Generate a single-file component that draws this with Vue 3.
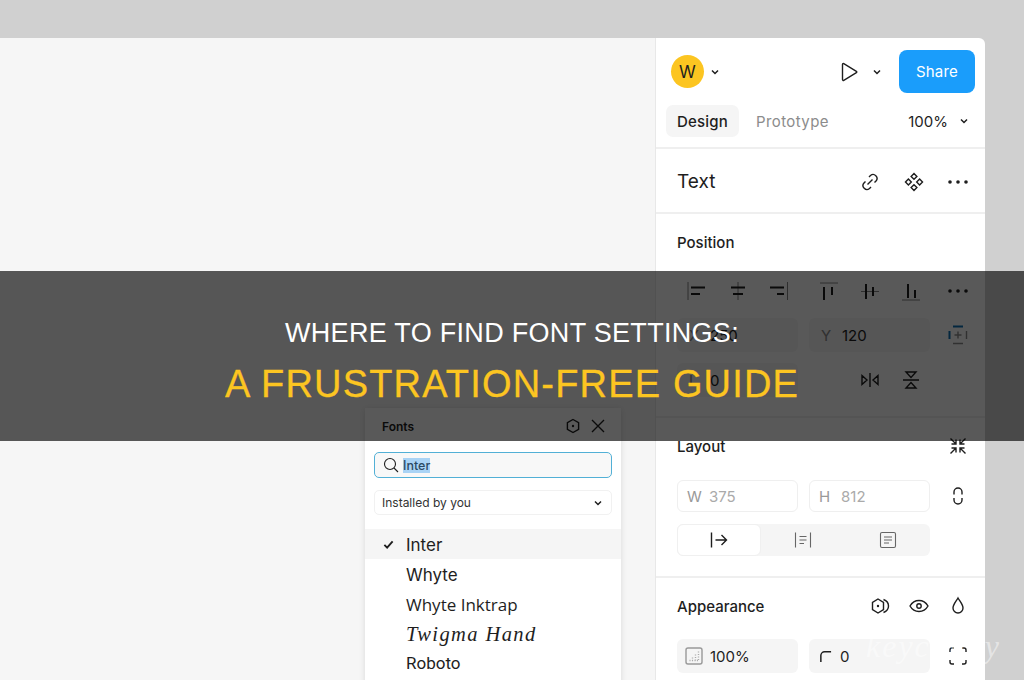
<template>
  <div class="page">
    <div class="window">
      <div class="canvas">
        <div class="fonts-pop">
          <div class="pop-head">
            <b>Fonts</b>
            <svg class="ic16 pop-hex" viewBox="0 0 16 16"><path d="M8 1.500l5.600 3.200v6.600L8 14.500l-5.600-3.200V4.700z" /><circle class="dot" cx="8" cy="8" r="1.200" /></svg>
            <svg class="ic16" viewBox="0 0 16 16"><path d="M2 2l12 12M14 2L2 14" /></svg>
          </div>
          <div class="pop-search">
            <svg class="ic16" viewBox="0 0 16 16"><circle cx="7" cy="7" r="5.500" /><path d="M11 11l4 4" /></svg>
            <span class="sel">Inter</span>
          </div>
          <div class="pop-select">
            <span>Installed by you</span>
            <svg class="chev" viewBox="0 0 8 8"><path d="M1 2.500l3 3 3-3" /></svg>
          </div>
          <ul class="font-list">
            <li class="on">
              <svg class="check" viewBox="0 0 12 12"><path d="M1.500 6.500l3 3 6-7" /></svg>
              Inter
            </li>
            <li>Whyte</li>
            <li class="inktrap">Whyte Inktrap</li>
            <li class="hand">Twigma Hand</li>
            <li class="roboto">Roboto</li>
          </ul>
        </div>
      </div>

      <aside class="panel">
        <section class="top">
          <div class="bar">
            <span class="avatar">W</span>
            <svg class="chev" viewBox="0 0 8 8"><path d="M1 2.500l3 3 3-3" /></svg>
            <svg class="play" viewBox="0 0 20 20"><path d="M3.500 2.400v15.200c0 .7.7 1 1.300.7l12.600-7.600c.5-.3.5-1.100 0-1.400L4.800 1.700c-.6-.3-1.300 0-1.300.7z" /></svg>
            <svg class="chev" viewBox="0 0 8 8"><path d="M1 2.500l3 3 3-3" /></svg>
            <button class="share">Share</button>
          </div>
          <div class="tabs">
            <span class="tab active">Design</span>
            <span class="tab">Prototype</span>
            <span class="zoom">100%</span>
            <svg class="chev" viewBox="0 0 8 8"><path d="M1 2.500l3 3 3-3" /></svg>
          </div>
        </section>

        <section class="text-row">
          <h3>Text</h3>
          <div class="tools">
            <svg class="ic20" viewBox="0 0 20 20"><path d="M7.500 12.500l5-5M9 5l1.500-1.500a3.900 3.900 0 015.500 5.500L14.500 10.500M11 15l-1.500 1.500A3.900 3.900 0 014 11l1.500-1.500" /></svg>
            <svg class="ic20" viewBox="0 0 20 20"><path d="M10 1.500l2.900 2.900L10 7.300 7.100 4.400zM15.600 7.100L18.500 10l-2.900 2.900L12.700 10zM4.400 7.100L7.300 10l-2.900 2.900L1.500 10zM10 12.700l2.900 2.900-2.900 2.900-2.900-2.900z" /></svg>
            <svg class="ic20" viewBox="0 0 20 20"><circle class="dot" cx="2" cy="10" r="1.800" /><circle class="dot" cx="10" cy="10" r="1.800" /><circle class="dot" cx="18" cy="10" r="1.800" /></svg>
          </div>
        </section>

        <section class="position">
          <h4>Position</h4>
          <div class="align-row">
            <div class="aligns">
              <svg v-for="a in alignIcons" :key="a.thick" class="ic20" viewBox="0 0 20 20">
                <path class="thin" :d="a.thin" />
                <path class="thick" :d="a.thick" />
              </svg>
            </div>
            <svg class="ic20" viewBox="0 0 20 20"><circle class="dot" cx="2" cy="10" r="1.800" /><circle class="dot" cx="10" cy="10" r="1.800" /><circle class="dot" cx="18" cy="10" r="1.800" /></svg>
          </div>
          <div class="grid-row">
            <div class="field"><i>X</i>250</div>
            <div class="field"><i>Y</i>120</div>
            <svg class="ic20 constraint" viewBox="0 0 20 20">
              <path class="blue" d="M5 1.500h10M1.500 6v8" />
              <path d="M18.500 6v8M5 18.500h10M10 6.500v7M6.500 10h7" />
            </svg>
          </div>
          <div class="grid-row">
            <div class="field"><i>L</i>0</div>
            <div class="flips">
              <svg class="ic20" viewBox="0 0 20 20"><path d="M10 3v14M2 5.500L7 10l-5 4.500zM18 5.500L13 10l5 4.500z" /></svg>
              <svg class="ic20" viewBox="0 0 20 20"><path d="M2 10h16M5 2h10l-5 5.500zM5 18h10l-5-5.500z" /></svg>
            </div>
          </div>
        </section>

        <section class="layout">
          <div class="head-row">
            <h4>Layout</h4>
            <svg class="ic20" viewBox="0 0 20 20"><path d="M2.500 2.500L8 8M8 3.500V8H3.500M17.500 2.500L12 8M12 3.500V8h4.500M2.500 17.500L8 12M8 16.500V12H3.500M17.500 17.500L12 12M12 16.500V12h4.500" /></svg>
          </div>
          <div class="grid-row">
            <div class="field ghost"><i>W</i>375</div>
            <div class="field ghost"><i>H</i>812</div>
            <svg class="ic20" viewBox="0 0 20 20"><path d="M6 8.500V6a4 4 0 018 0v2.500M6 12v2a4 4 0 008 0v-2" /></svg>
          </div>
          <div class="segments">
            <span class="seg active">
              <svg class="ic20" viewBox="0 0 20 20"><path d="M2.500 2.500v15M6.500 10h11M12.500 5l5 5-5 5" /></svg>
            </span>
            <span class="seg">
              <svg class="ic20 soft" viewBox="0 0 20 20"><path d="M2.500 2.500v15M17.500 2.500v15M6.500 6.500h7M6.500 10h7M6.500 13.500h4.500" /></svg>
            </span>
            <span class="seg">
              <svg class="ic20 soft" viewBox="0 0 20 20"><rect x="2.500" y="2.500" width="15" height="15" rx="1.500" /><path d="M6 7h8M6 10h8M6 13h5" /></svg>
            </span>
          </div>
        </section>

        <section class="appearance">
          <div class="head-row">
            <h4>Appearance</h4>
            <div class="tools small">
              <svg class="ic20" viewBox="0 0 20 20"><path d="M8 3l5.500 3.500v7L8 17l-5.500-3.500v-7z" /><circle class="dot" cx="8" cy="10" r="1.200" /><path d="M13.500 3.500c4 1.500 5 3.500 5 6.500s-1 5-5 6.500" /></svg>
              <svg class="ic20" viewBox="0 0 20 20"><path d="M1 10c2-3.500 5-5.500 9-5.500s7 2 9 5.500c-2 3.500-5 5.500-9 5.500S3 13.500 1 10z" /><circle cx="10" cy="10" r="2.200" /></svg>
              <svg class="ic20" viewBox="0 0 20 20"><path d="M10 2c-2 3.500-5 6.500-5 10a5 5 0 0010 0c0-3.500-3-6.500-5-10z" /></svg>
            </div>
          </div>
          <div class="grid-row">
            <div class="field tight">
              <svg class="ic20 opacity" viewBox="0 0 20 20"><rect x="2" y="2" width="16" height="16" rx="2" /><path class="dots" d="M14.500 5.500v9M11.500 8.500v6M8.500 11.500v3M5.500 14.500h9" /></svg>
              100%
            </div>
            <div class="field tight">
              <svg class="ic14 corner" viewBox="0 0 14 14"><path d="M2 13V6a4 4 0 014-4h7" /></svg>
              0
            </div>
            <svg class="ic20" viewBox="0 0 20 20"><path d="M2 6V4a2 2 0 012-2h2M14 2h2a2 2 0 012 2v2M18 14v2a2 2 0 01-2 2h-2M6 18H4a2 2 0 01-2-2v-2" /></svg>
          </div>
        </section>
      </aside>
    </div>

    <span class="mark">keycandy</span>

    <div class="band">
      <p class="line-one">WHERE TO FIND FONT SETTINGS:</p>
      <p class="line-two">A FRUSTRATION-FREE GUIDE</p>
    </div>
  </div>
</template>

<script setup>
const alignIcons = [
  { thin: 'M1 1v18', thick: 'M4 6.500h14M4 13h9' },
  { thin: 'M10 1v18', thick: 'M3 6.500h14M5 13h10' },
  { thin: 'M18.500 1v18', thick: 'M1 6.500h14M8 13h7' },
  { thin: 'M1 2h18', thick: 'M5 6v13M13 6v8' },
  { thin: 'M1 10.500h18', thick: 'M6 3v15M13 6v9' },
  { thin: 'M1 19h18', thick: 'M7 3v14M14 9v8' },
]
</script>

<style>
html, body { margin: 0; height: 100%; overflow: hidden; background: #d0d0d0; }
</style>

<style scoped>
.page { position: relative; width: 1024px; height: 680px; overflow: hidden; background: #d0d0d0; font-family: Inter, "Liberation Sans", sans-serif; color: #1e1e1e; }
.window { display: flex; width: 985px; height: 642px; margin-top: 38px; border-top-right-radius: 6px; overflow: hidden; }
.canvas { position: relative; flex: 1; background: #f6f6f6; }
.panel { width: 330px; flex: none; background: #fff; border-left: 1px solid #e8e8e8; box-sizing: border-box; }
section { box-sizing: border-box; border-bottom: 2px solid #efefef; }
h3, h4, p, ul { margin: 0; padding: 0; }
svg { fill: none; stroke: #1e1e1e; stroke-width: 1.4; flex: none; }
.dot { fill: #1e1e1e; stroke: none; }
.ic20 { width: 20px; height: 20px; }
.ic16 { width: 16px; height: 16px; }
.ic14 { width: 13px; height: 13px; }
.chev { width: 8px; height: 8px; stroke-width: 1.500; }

.top { height: 111px; padding: 12px 10px 0 10px; }
.bar { display: flex; align-items: center; height: 43px; padding-left: 5px; }
.avatar { width: 33px; height: 33px; border-radius: 50%; background: #fcc521; display: flex; align-items: center; justify-content: center; font-size: 17px; font-weight: 400; }
.bar .chev:nth-child(2) { margin-left: 7px; }
.play { width: 20px; height: 20px; margin-left: auto; }
.bar .chev:nth-child(4) { margin-left: 14px; }
.share { margin-left: 18px; width: 76px; height: 43px; border: 0; border-radius: 8px; background: #1a9dfb; color: #fff; font: 400 15px Inter, sans-serif; letter-spacing: .2px; }
.tabs { display: flex; align-items: center; margin-top: 12px; height: 32px; }
.tab { padding: 2px 11px 0; line-height: 30px; border-radius: 7px; font-size: 15px; color: #8c8c8c; letter-spacing: .4px; }
.tab.active { background: #f5f5f5; color: #1e1e1e; font-weight: 500; margin-right: 6px; letter-spacing: .2px; }
.zoom { margin-left: auto; font-size: 15px; padding-top: 1px; }
.tabs .chev { margin: 0 7px 0 12px; }

.text-row { height: 65px; display: flex; align-items: center; justify-content: space-between; padding: 2px 17px 0 21px; }
h3 { font-size: 19px; font-weight: 400; }
.tools { display: flex; gap: 24px; align-items: center; }
.tools.small { gap: 19px; }
h4 { font-size: 15px; font-weight: 500; }

.position { height: 204px; padding: 19px 17px 0 21px; }
.align-row { display: flex; justify-content: space-between; align-items: center; margin-top: 29px; }
.aligns { display: flex; gap: 21px; margin-left: 10px; }
.aligns svg:nth-child(4) { margin-left: 9px; }
.thin { stroke: #666; stroke-width: .8; }
.thick { stroke: #1e1e1e; stroke-width: 2; }
.grid-row { display: grid; grid-template-columns: 121px 121px 1fr; column-gap: 11px; align-items: center; margin-top: 11px; }
.align-row + .grid-row { margin-top: 17px; }
.grid-row > svg:last-child { justify-self: end; }
.field { display: flex; align-items: center; height: 34px; border-radius: 6px; background: #f5f5f5; font-size: 15px; padding-left: 12px; box-sizing: border-box; gap: 8px; }
.field i { font-style: normal; color: #8c8c8c; width: 13px; }
.field.ghost { background: #fff; border: 1.500px solid #efefef; color: #aaa; height: 32px; padding-left: 9px; gap: 9px; }
.field.ghost i { color: #999; }
.field.tight { padding-left: 7px; gap: 6px; }
.flips { display: flex; gap: 21px; padding-left: 51px; }
.constraint .blue { stroke: #0c70b4; stroke-width: 2; }
.constraint { stroke: #8c8c8c; }

.layout { height: 160px; padding: 19px 17px 0 21px; }
.head-row { display: flex; justify-content: space-between; align-items: center; height: 18px; }
.layout .grid-row { margin-top: 25px; }
.segments { display: grid; grid-template-columns: repeat(3, 1fr); width: 253px; height: 32px; margin-top: 12px; background: #f5f5f5; border-radius: 6px; }
.seg { display: flex; align-items: center; justify-content: center; }
.seg.active { background: #fff; border-radius: 6px; border: 1px solid #f0f0f0; }
.soft { stroke: #666; stroke-width: 1.100; }

.appearance { border-bottom: 0; padding: 19px 17px 0 21px; }
.appearance .grid-row { margin-top: 24px; }
.opacity { stroke: #999; }
.dots { stroke: #aaa; stroke-dasharray: 1 1.500; }
.corner { stroke-width: 1.600; margin-left: 3px; margin-right: 2px; }

.mark { position: absolute; left: 866px; top: 628px; font: italic 32px "Liberation Serif", serif; letter-spacing: 2px; color: rgba(255, 255, 255, .45); }

.fonts-pop { position: absolute; left: 365px; top: 370px; width: 256px; height: 300px; background: #fff; box-shadow: 0 1px 6px rgba(0, 0, 0, .12); }
.pop-head { display: flex; align-items: center; height: 36px; padding: 0 15px 0 17px; font-size: 12px; }
.pop-head b { font-weight: 600; margin-right: auto; }
.pop-hex { margin-right: 9px; }
.pop-search { display: flex; align-items: center; gap: 4px; height: 26px; margin: 8px 9px 0; padding-left: 8px; border: 1.500px solid #52b0d6; border-radius: 5px; background: #f8f8f8; font-size: 12.500px; box-sizing: border-box; }
.pop-search svg { stroke-width: 1.100; }
.sel { background: #a9d3f5; color: #2b4a63; font-weight: 500; }
.pop-select { display: flex; justify-content: space-between; align-items: center; height: 25px; margin: 12px 9px 0; padding: 0 9px 0 7px; border: 1.500px solid #f1f1f1; border-radius: 5px; font-size: 12px; box-sizing: border-box; color: #333; }
.font-list { list-style: none; margin-top: 14px; font-size: 17px; }
.font-list li { padding-left: 41px; height: 29.500px; line-height: 33px; position: relative; }
.font-list li.on { background: #f5f5f5; }
.check { position: absolute; left: 18px; top: 10px; width: 11px; height: 11px; stroke-width: 2; }
.inktrap { font-family: "Open Sans", sans-serif; }
.hand { font-family: "Liberation Serif", serif; font-style: italic; font-size: 20.500px; letter-spacing: 1.400px; }
.roboto { font-family: Roboto, sans-serif; }

.band { position: absolute; left: 0; right: 0; top: 271px; height: 170px; background: rgba(0, 0, 0, .65); display: flex; flex-direction: column; align-items: center; justify-content: center; font-family: "Liberation Sans", sans-serif; }
.line-one { color: #fff; font-size: 27px; line-height: 40px; margin-top: 9px; letter-spacing: .3px; }
.line-two { color: #fcc521; font-size: 38px; line-height: 50px; margin-top: 6px; letter-spacing: 1.170px; -webkit-text-stroke: .3px #fcc521; }
</style>
